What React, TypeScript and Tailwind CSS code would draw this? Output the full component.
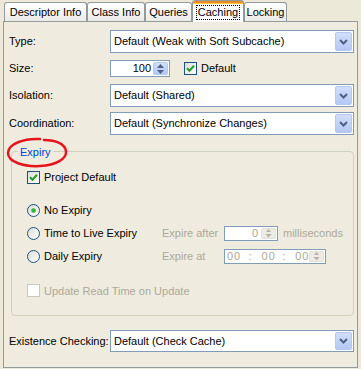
import React from "react";

const FONT = "font-['Liberation_Sans',Arial,sans-serif]";

function Chevron({ color = "#4d6185" }: { color?: string }) {
  return (
    <svg width="9" height="6" viewBox="0 0 9 6">
      <path d="M1 1 L4.5 4.5 L8 1" fill="none" stroke={color} strokeWidth="2" />
    </svg>
  );
}

function Combo({ value, h = "h-[23px]" }: { value: string; h?: string }) {
  return (
    <div className={`flex-1 ${h} bg-white border border-[#7f9db9] flex items-center pl-[3px] pr-[1px]`}>
      <span className="flex-1 truncate">{value}</span>
      <div className="w-[17px] h-[calc(100%-2px)] rounded-[2px] border border-[#b4c7f0] bg-gradient-to-b from-[#d2def9] to-[#b3c8f5] flex items-center justify-center">
        <Chevron />
      </div>
    </div>
  );
}

function SpinButton({ disabled }: { disabled?: boolean }) {
  const c = disabled ? "#b6b4a8" : "#4d6185";
  return (
    <div
      className={`w-[15px] h-full flex flex-col items-center justify-center gap-[2px] rounded-[2px] border ${
        disabled ? "border-[#e2e1d8] bg-[#ecebe4]" : "border-[#b4c7f0] bg-gradient-to-b from-[#d2def9] to-[#b3c8f5]"
      }`}
    >
      <svg width="7" height="4" viewBox="0 0 7 4">
        <path d="M0 4 L3.5 0 L7 4 Z" fill={c} />
      </svg>
      <svg width="7" height="4" viewBox="0 0 7 4">
        <path d="M0 0 L3.5 4 L7 0 Z" fill={c} />
      </svg>
    </div>
  );
}

function Check({ checked, disabled }: { checked?: boolean; disabled?: boolean }) {
  return (
    <div
      className={`w-[13px] h-[13px] shrink-0 border flex items-center justify-center ${
        disabled ? "border-[#cac8bb] bg-white" : "border-[#1c5180] bg-gradient-to-br from-[#dcdcd7] to-white"
      }`}
    >
      {checked && (
        <svg width="9" height="9" viewBox="0 0 9 9">
          <path d="M1 4.2 L3.5 6.7 L8 1.8" fill="none" stroke="#21a121" strokeWidth="2" />
        </svg>
      )}
    </div>
  );
}

function Radio({ checked }: { checked?: boolean }) {
  return (
    <div className="w-[13px] h-[13px] shrink-0 rounded-full border border-[#1c5180] bg-gradient-to-br from-[#dcdcd7] to-white flex items-center justify-center">
      {checked && <div className="w-[5px] h-[5px] rounded-full bg-[#2fb12f] border border-[#50c450]" />}
    </div>
  );
}

function Tab({ label, w, active }: { label: string; w: string; active?: boolean }) {
  if (active) {
    return (
      <div
        className={`${w} h-[22px] -mb-[1px] relative z-10 rounded-t-[3px] border border-b-0 border-[#919b9c] bg-[#fcfcfe] flex items-center justify-center`}
      >
        <div className="absolute left-0 right-0 top-0 h-[3px] rounded-t-[2px] bg-[#e68b2c] border-b border-[#ffc83c]" />
        <span className="mt-[2px] px-[1px] leading-[13px] outline-1 outline-dotted outline-black">{label}</span>
      </div>
    );
  }
  return (
    <div
      className={`${w} h-[19px] rounded-t-[3px] border border-b-0 border-[#919b9c] bg-gradient-to-b from-white to-[#ecebe6] flex items-center justify-center`}
    >
      <span className="mt-[1px]">{label}</span>
    </div>
  );
}

export default function App() {
  return (
    <div className={`w-[361px] h-[369px] bg-[#ece9d8] ${FONT} text-[11px] text-black px-[3px] relative overflow-hidden`}>
      {/* tabs */}
      <div className="h-[21px] flex items-end pl-[1px]">
        <Tab label="Descriptor Info" w="w-[83px]" />
        <Tab label="Class Info" w="w-[58px]" />
        <Tab label="Queries" w="w-[47px]" />
        <Tab label="Caching" w="w-[52px]" active />
        <Tab label="Locking" w="w-[43px]" />
      </div>

      {/* panel */}
      <div className="h-[347px] border border-[#919b9c] bg-[#efecdf] pl-[5px] pr-[3px] flex flex-col">
        <div className="mt-[8px] flex items-center">
          <span className="w-[101px]">Type:</span>
          <Combo value="Default (Weak with Soft Subcache)" />
        </div>

        <div className="mt-[7px] h-[17px] flex items-center">
          <span className="w-[101px]">Size:</span>
          <div className="w-[60px] h-[17px] bg-white border border-[#7f9db9] flex items-center pr-[1px] py-[1px]">
            <span className="flex-1 text-right pr-[2px]">100</span>
            <SpinButton />
          </div>
          <div className="ml-[14px] flex items-center gap-[4px]">
            <Check checked />
            <span>Default</span>
          </div>
        </div>

        <div className="mt-[7px] flex items-center">
          <span className="w-[101px]">Isolation:</span>
          <Combo value="Default (Shared)" />
        </div>

        <div className="mt-[5px] flex items-center">
          <span className="w-[101px]">Coordination:</span>
          <Combo value="Default (Synchronize Changes)" />
        </div>

        {/* Expiry group */}
        <div className="mt-[16px] ml-[2px] w-[343px] h-[165px] rounded-[4px] border border-[#d0d0bf] relative flex flex-col pl-[15px]">
          <span className="absolute left-[6px] -top-[8px] px-[2px] bg-[#efecdf] text-[#0046d5]">Expiry</span>

          <div className="mt-[17px] flex items-center gap-[4px]">
            <Check checked />
            <span>Project Default</span>
          </div>

          <div className="mt-[13px] h-[23px] flex items-center gap-[4px]">
            <Radio checked />
            <span>No Expiry</span>
          </div>
          <div className="h-[23px] flex items-center">
            <div className="w-[135px] flex items-center gap-[4px]">
              <Radio />
              <span>Time to Live Expiry</span>
            </div>
            <span className="w-[62px] text-[#aca899]">Expire after</span>
            <div className="w-[54px] h-[15px] bg-white border border-[#7f9db9] flex items-center pr-[1px] py-[1px]">
              <span className="flex-1 text-right pr-[3px] text-[#aca899]">0</span>
              <SpinButton disabled />
            </div>
            <span className="ml-[5px] text-[#aca899]">milliseconds</span>
          </div>
          <div className="h-[23px] flex items-center">
            <div className="w-[135px] flex items-center gap-[4px]">
              <Radio />
              <span>Daily Expiry</span>
            </div>
            <span className="w-[62px] text-[#aca899]">Expire at</span>
            <div className="w-[102px] h-[15px] bg-white border border-[#7f9db9] flex items-center pr-[1px] py-[1px] text-[#aca899] tracking-[1px]">
              <span className="ml-[2px] w-[22px]">00</span>
              <span className="w-[13px]">:</span>
              <span className="w-[21px]">00</span>
              <span className="w-[13px]">:</span>
              <span className="w-[14px]">00</span>
              <SpinButton disabled />
            </div>
          </div>

          <div className="mt-[15px] flex items-center gap-[4px]">
            <Check disabled />
            <span className="text-[#aca899]">Update Read Time on Update</span>
          </div>
        </div>

        <div className="mt-[14px] flex items-center">
          <span className="w-[101px]">Existence Checking:</span>
          <Combo value="Default (Check Cache)" h="h-[22px]" />
        </div>
      </div>

      {/* red annotation circle */}
      <svg className="absolute left-[4px] top-[136px]" width="66" height="34" viewBox="0 0 66 34">
        <path
          d="M36 3 C20 2 4 8 4 17 C4 26 20 31 36 30 C52 29 63 23 62 15 C61 8 52 4 40 4"
          fill="none"
          stroke="#e8141c"
          strokeWidth="2.5"
          strokeLinecap="round"
        />
      </svg>
    </div>
  );
}
